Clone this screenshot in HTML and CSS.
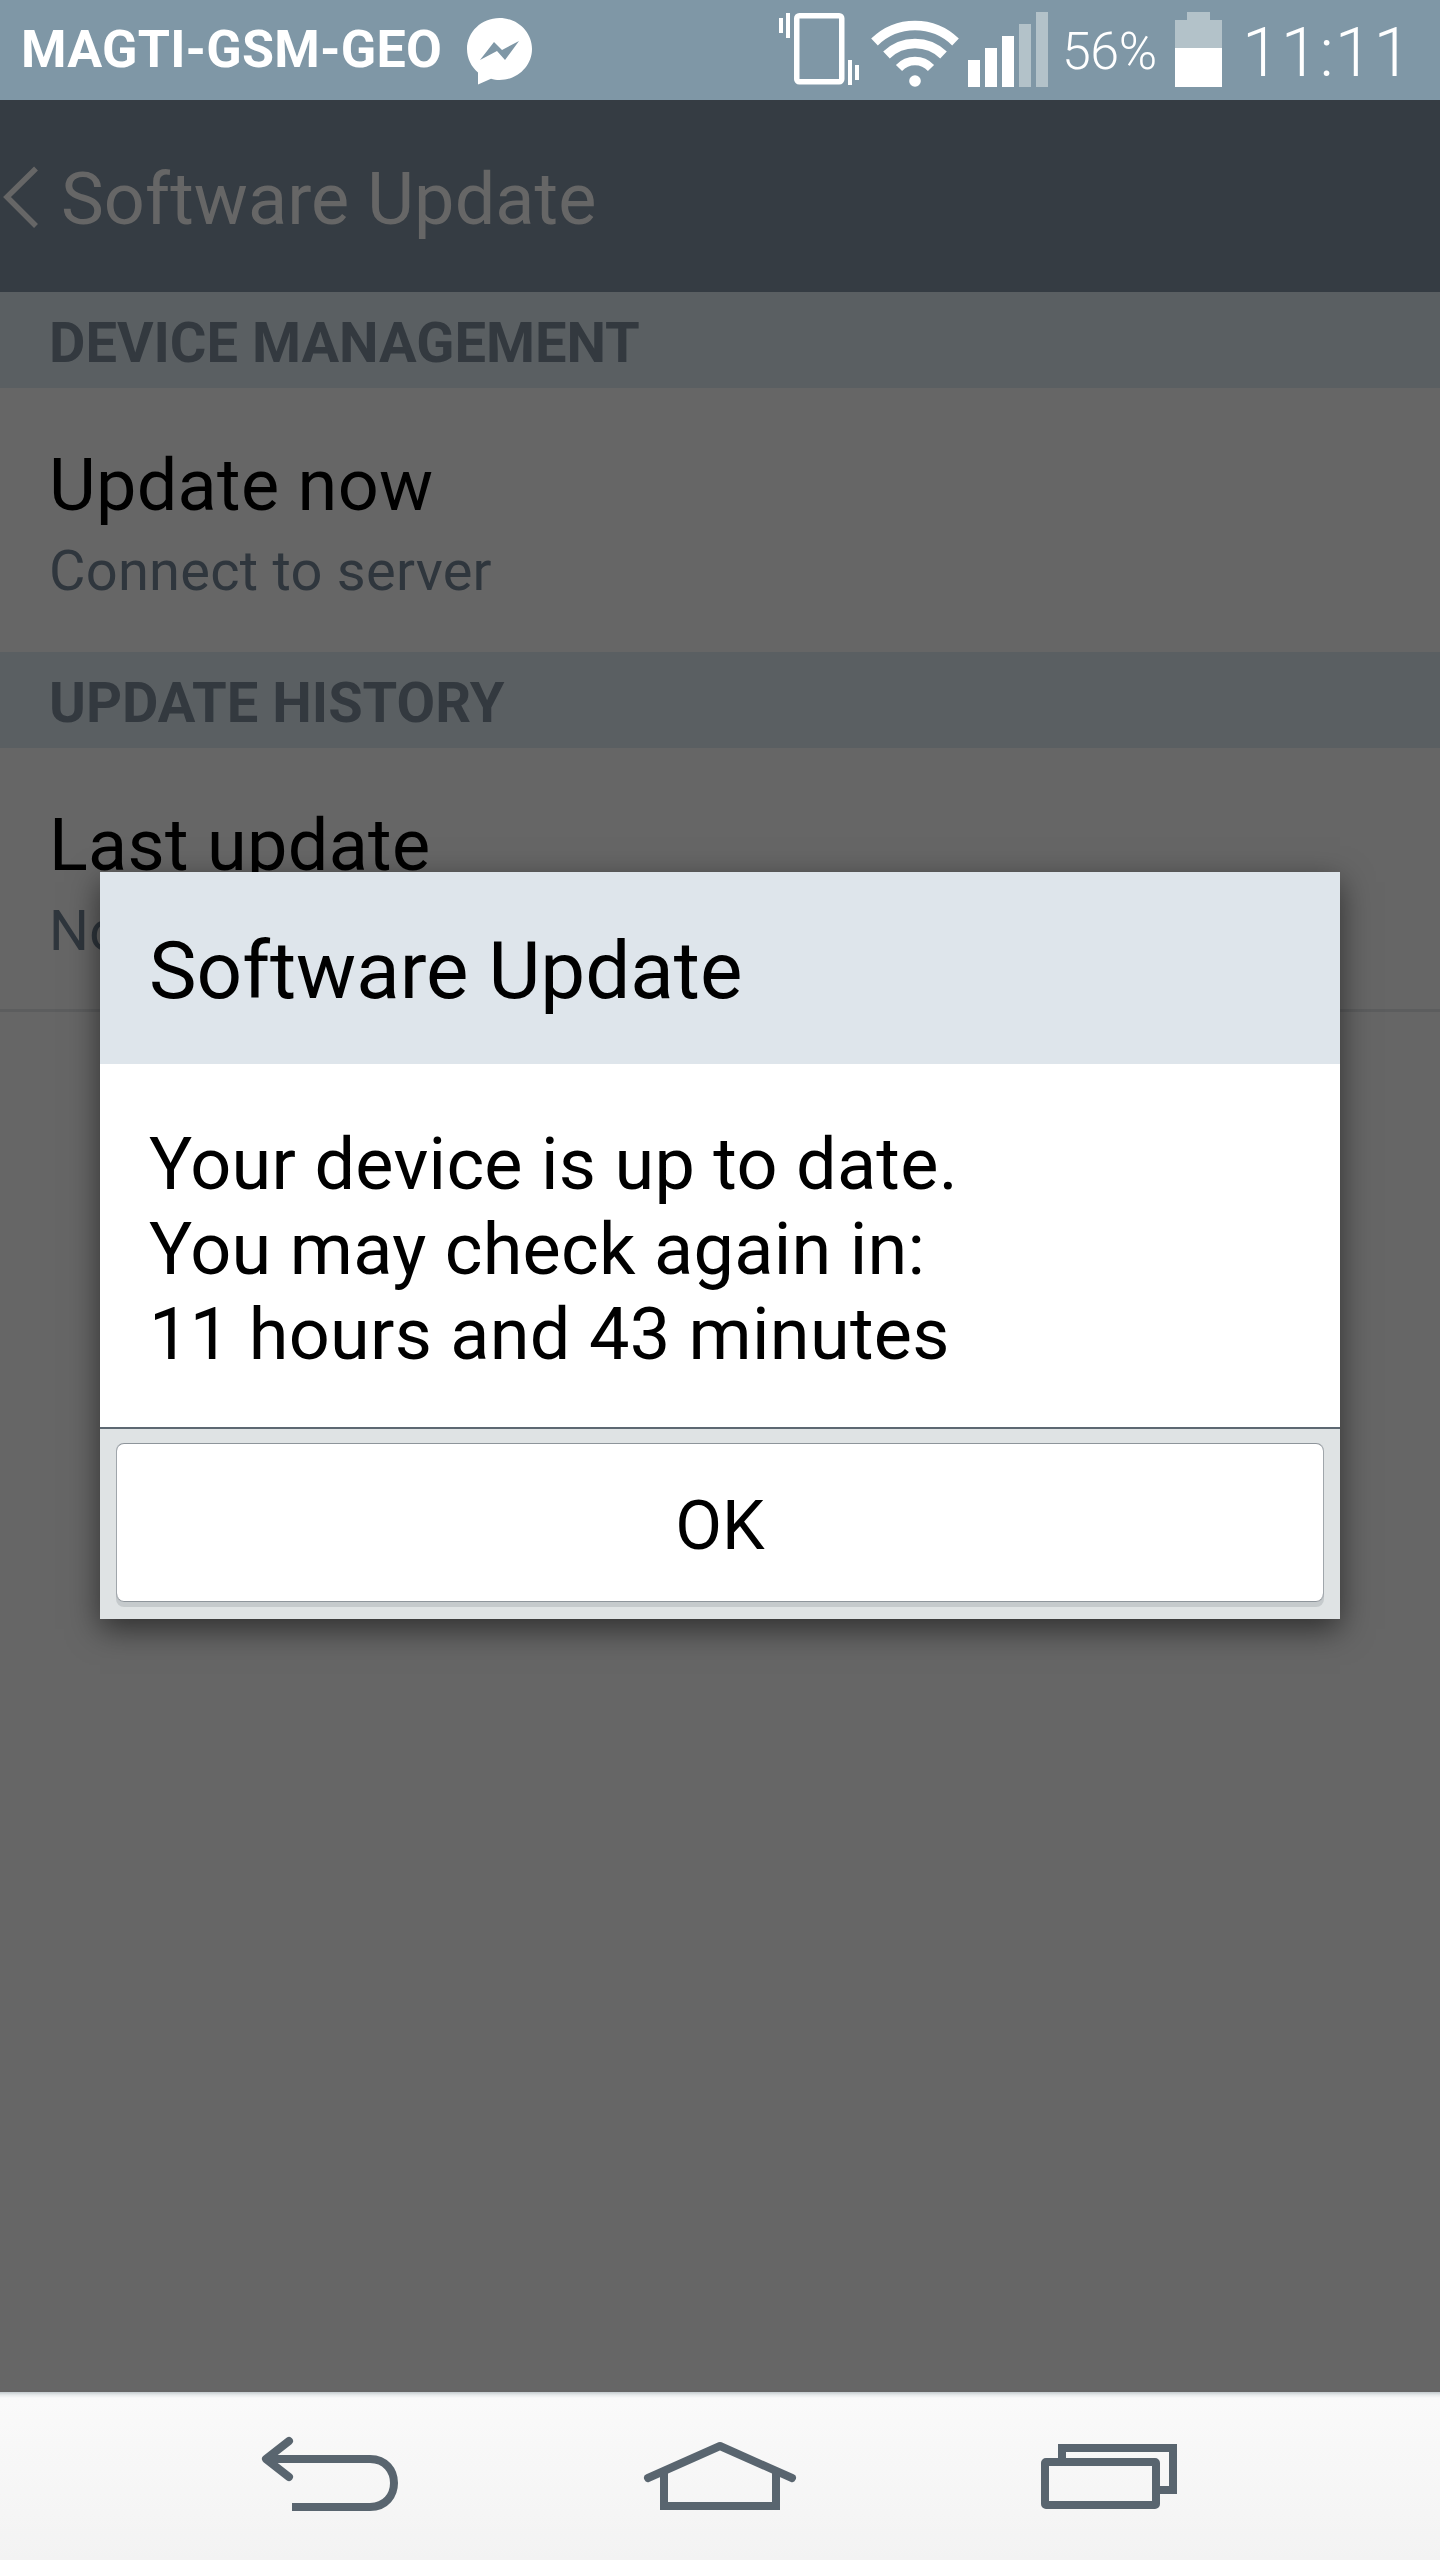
FILE: index.html
```html
<!DOCTYPE html>
<html lang="en">
<head>
<meta charset="utf-8">
<title>Software Update</title>
<link rel="stylesheet" href="styles.css">
</head>
<body>
<div class="screen">
  <header class="statusbar">
    <div class="status-left">
      <span class="carrier">MAGTI-GSM-GEO</span>
      <svg class="ic-messenger" viewBox="466 16 68 70" aria-hidden="true">
        <path fill="#fff" d="M499.5 18C517.5 18 532 32 532 49C532 66 517.5 80 499.5 80C496.5 80 493.5 79.6 491 78.8L478 84.5L478 72.5C471.5 67 467 58.500 467 49C467 32 481.500 18 499.500 18Z"/>
        <path fill="#7f97a6" d="M480 60L494 42L502 50L519 41L505 60L497 51Z"/>
      </svg>
    </div>
    <div class="status-right">
      <svg class="ic-vibrate" viewBox="780 0 80 100" aria-hidden="true">
        <rect fill="#fff" x="780" y="18" width="4" height="15"/>
        <rect fill="#fff" x="787" y="13" width="4" height="25"/>
        <rect fill="none" stroke="#fff" stroke-width="5.500" x="797.750" y="15.750" width="45" height="66" rx="2.500"/>
        <rect fill="#fff" x="849" y="60" width="4" height="25"/>
        <rect fill="#fff" x="856" y="65" width="4" height="15"/>
      </svg>
      <svg class="ic-wifi" viewBox="872 0 88 100" aria-hidden="true">
        <g fill="none" stroke="#fff">
          <path stroke-width="9.500" d="M875.500 42A58 58 0 0 1 956.500 42"/>
          <path stroke-width="9.500" d="M887.500 55A41 41 0 0 1 944.500 55"/>
          <path stroke-width="8.500" d="M900 68A22 22 0 0 1 932 68"/>
        </g>
        <circle fill="#fff" cx="916" cy="81" r="5.800"/>
      </svg>
      <svg class="ic-signal" viewBox="969 0 80 100" aria-hidden="true">
        <rect fill="#fff" x="969" y="60" width="12" height="27"/>
        <rect fill="#fff" x="986" y="48" width="12" height="39"/>
        <rect fill="#fff" x="1003" y="36" width="12" height="51"/>
        <rect fill="#b3c2c9" x="1020" y="24" width="12" height="63"/>
        <rect fill="#b3c2c9" x="1037" y="12" width="12" height="75"/>
      </svg>
      <span class="battery-pct">56%</span>
      <svg class="ic-battery" viewBox="1176 0 47 100" aria-hidden="true">
        <path fill="#b3c2c9" d="M1188 12H1211V20H1223V48H1176V20H1188Z"/>
        <rect fill="#fff" x="1176" y="48" width="47" height="39"/>
      </svg>
      <span class="clock">11:11</span>
    </div>
  </header>

  <div class="actionbar">
    <svg class="ic-chevron" viewBox="0 160 42 74" aria-hidden="true">
      <path fill="none" stroke="#666" stroke-width="5.500" d="M36 168.500L7 197L36 226"/>
    </svg>
    <span class="actionbar-title">Software Update</span>
  </div>

  <div class="section-head">DEVICE MANAGEMENT</div>
  <div class="row">
    <div class="row-title">Update now</div>
    <div class="row-sub">Connect to server</div>
  </div>
  <div class="section-head">UPDATE HISTORY</div>
  <div class="row row-last">
    <div class="row-title">Last update</div>
    <div class="row-sub">None</div>
  </div>
  <div class="spacer"></div>

  <nav class="navbar">
    <svg class="ic-back" viewBox="258 2434 144 80" aria-hidden="true">
      <path fill="none" stroke="#59656f" stroke-width="8" stroke-linecap="round" stroke-linejoin="round" d="M289 2441L266 2459L289 2477"/>
      <path fill="none" stroke="#59656f" stroke-width="8" stroke-linecap="butt" d="M270 2459H370C386 2459 394 2471 394 2483C394 2495 386 2507 370 2507H292"/>
    </svg>
    <svg class="ic-home" viewBox="642 2436 156 78" aria-hidden="true">
      <path fill="none" stroke="#59656f" stroke-width="8" stroke-linecap="round" stroke-linejoin="round" d="M648 2478L720 2446L792 2478"/>
      <path fill="none" stroke="#59656f" stroke-width="8" d="M664 2473V2506H776V2473"/>
    </svg>
    <svg class="ic-recent" viewBox="1038 2440 142 72" aria-hidden="true">
      <path fill="none" stroke="#59656f" stroke-width="8" d="M1062 2458V2448H1173V2490H1160"/>
      <rect fill="none" stroke="#59656f" stroke-width="8" x="1045" y="2462" width="111" height="43" rx="1"/>
    </svg>
  </nav>

  <div class="dialog">
    <div class="dialog-title">Software Update</div>
    <div class="dialog-body">
      <p>Your device is up to date.</p>
      <p>You may check again in:</p>
      <p>11 hours and 43 minutes</p>
    </div>
    <div class="dialog-footer">
      <button class="dialog-btn" type="button">OK</button>
    </div>
  </div>
</div>
</body>
</html>
```

FILE: styles.css
```css
* { box-sizing: border-box; }
html, body { margin: 0; padding: 0; }
body { font-family: Roboto, "Liberation Sans", sans-serif; background: #666; }

.screen {
  position: relative;
  width: 1440px;
  height: 2560px;
  display: flex;
  flex-direction: column;
  overflow: hidden;
  background: #666;
}

/* status bar */
.statusbar {
  flex: 0 0 100px;
  height: 100px;
  display: flex;
  justify-content: space-between;
  background: #7f97a6;
  color: #fff;
}
.status-left { display: flex; align-items: center; height: 100px; padding-left: 21px; }
.carrier { width: 420px; font-size: 52px; font-weight: 700; line-height: 100px; letter-spacing: 0.25px; white-space: nowrap; }
.ic-messenger { width: 68px; height: 70px; margin-left: 25px; margin-top: 2px; }
.status-right { display: flex; align-items: flex-start; height: 100px; padding-right: 41px; }
.status-right svg { height: 100px; flex: none; }
.ic-vibrate { width: 80px; }
.ic-wifi { width: 88px; margin-left: 12px; }
.ic-signal { width: 80px; margin-left: 9px; }
.battery-pct { width: 103px; margin-left: 14px; margin-top: 2px; font-size: 52px; font-weight: 300; line-height: 100px; letter-spacing: -0.5px; }
.ic-battery { width: 47px; margin-left: 10px; }
.clock { width: 157px; margin-left: 20px; margin-top: 3px; font-size: 68px; font-weight: 300; line-height: 100px; letter-spacing: 1px; white-space: nowrap; }

/* action bar */
.actionbar {
  flex: 0 0 192px;
  display: flex;
  align-items: center;
  background: #353c43;
}
.ic-chevron { width: 42px; height: 74px; margin-top: 2px; }
.actionbar-title { margin-left: 19px; margin-top: 6px; font-size: 72px; font-weight: 400; letter-spacing: 0.1px; color: #666; }

/* list */
.section-head {
  flex: 0 0 96px;
  padding-left: 49px;
  padding-top: 6px;
  background: #5a5f62;
  color: #33393f;
  font-size: 56px;
  font-weight: 700;
  line-height: 90px;
  white-space: nowrap;
}
.row { flex: 0 0 264px; padding: 56px 50px 0 49px; }
.row-last { flex-basis: 264px; border-bottom: 3px solid #5c5d5e; }
.row-title { font-size: 72px; line-height: 84px; color: #000; letter-spacing: 0.3px; }
.row-sub { margin-top: 7px; font-size: 56px; line-height: 72px; color: #2f363d; letter-spacing: 0.25px; }
.spacer { flex: 1 1 auto; }

/* navigation bar */
.navbar {
  flex: 0 0 168px;
  background: linear-gradient(#c3cacd 0, #e8ebec 3px, #fafafa 6px, #f3f3f3 100%);
  position: relative;
  display: flex;
  align-items: flex-start;
  padding-top: 42px;
}
.ic-back { width: 144px; height: 80px; margin-left: 258px; }
.ic-home { width: 156px; height: 78px; margin-left: 240px; margin-top: 2px; }
.ic-recent { width: 142px; height: 72px; margin-left: 240px; margin-top: 6px; }

/* dialog */
.dialog {
  position: absolute;
  left: 100px;
  top: 872px;
  width: 1240px;
  height: 747px;
  display: flex;
  flex-direction: column;
  background: #fff;
  box-shadow: 0 10px 30px rgba(0, 0, 0, 0.55);
}
.dialog-title {
  flex: 0 0 192px;
  padding-left: 49px;
  padding-top: 6px;
  background: #dee5eb;
  color: #000;
  font-size: 80px;
  line-height: 186px;
  white-space: nowrap;
}
.dialog-body {
  flex: 0 0 365px;
  padding: 58px 49px 0;
  border-bottom: 2px solid #5d6872;
  font-size: 72px;
  line-height: 85px;
  letter-spacing: 0.3px;
  color: #000;
}
.dialog-body p { margin: 0; white-space: nowrap; }
.dialog-footer { flex: 1 1 auto; padding: 14px 16px 12px; background: #dfe3e4; }
.dialog-btn {
  display: block;
  width: 100%;
  height: 159px;
  padding: 6px 0 0;
  border: 0;
  border-top: 1px solid #8e959b;
  border-left: 1px solid #a0a6ab;
  border-right: 1px solid #a0a6ab;
  border-radius: 8px;
  background: #fff;
  box-shadow: inset 0 -1px 0 #8e959b, 0 5px 0 #c5cacc;
  font-family: Roboto, "Liberation Sans", sans-serif;
  font-size: 68px;
  color: #000;
}
```
